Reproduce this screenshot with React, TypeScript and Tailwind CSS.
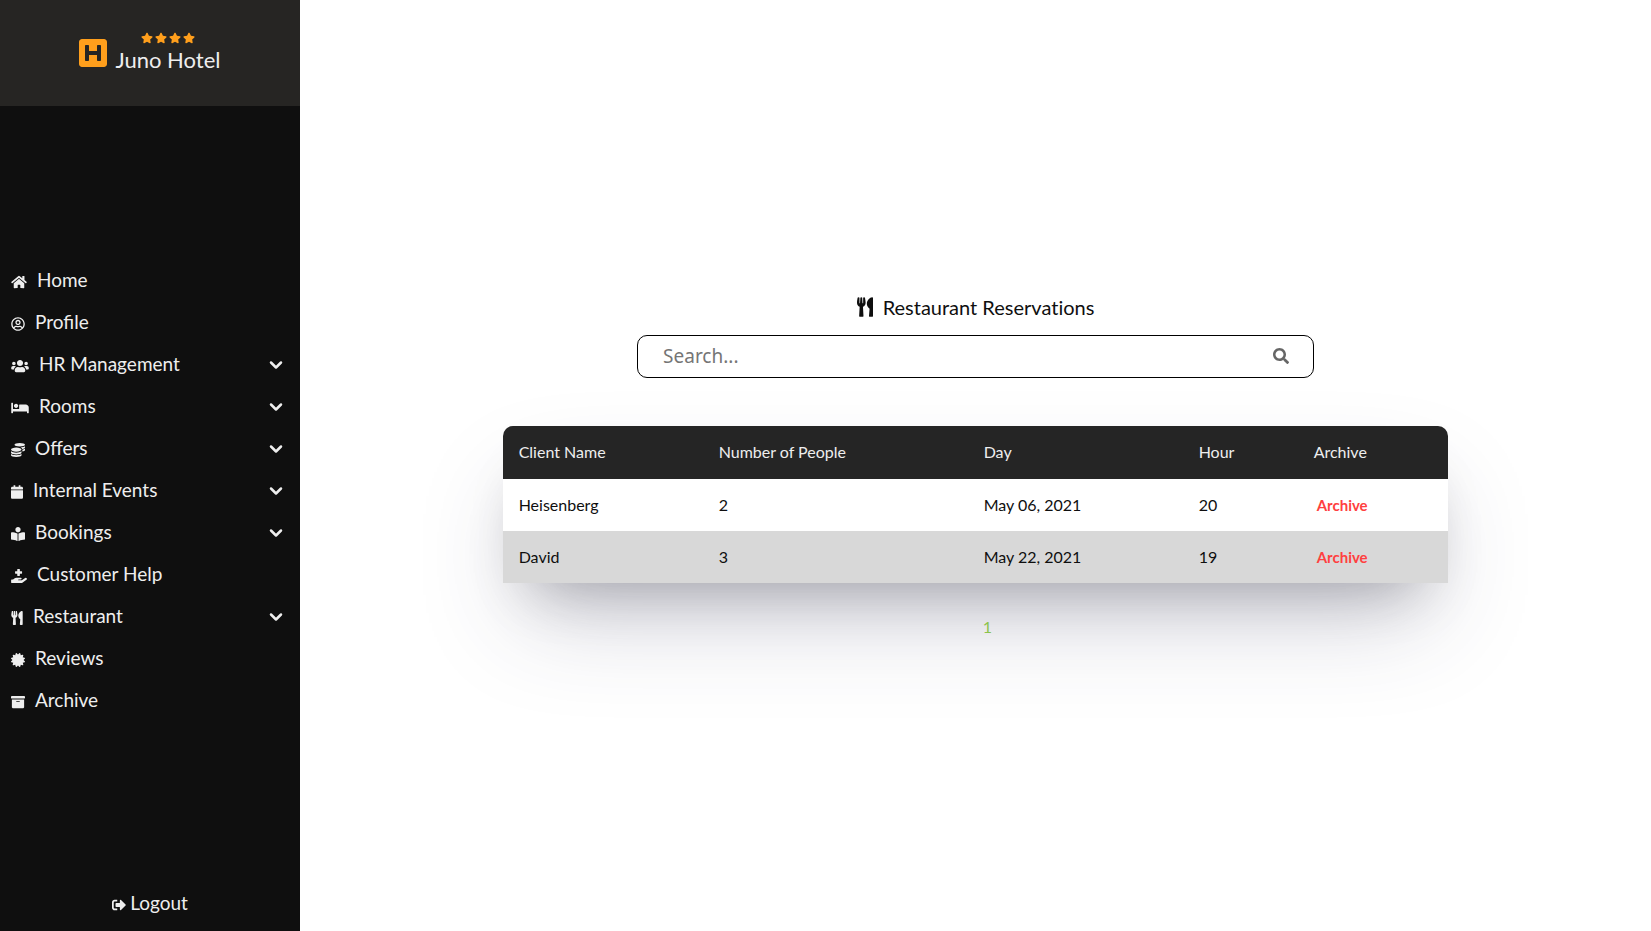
import type { ReactNode } from "react";
import type { IconType } from "react-icons";
import {
  FaArchive,
  FaBed,
  FaBookReader,
  FaCalendar,
  FaCertificate,
  FaCoins,
  FaHandHoldingMedical,
  FaHome,
  FaHSquare,
  FaRegUserCircle,
  FaSearch,
  FaSignOutAlt,
  FaStar,
  FaUsers,
  FaUtensils,
} from "react-icons/fa";
import { FiChevronDown } from "react-icons/fi";

type NavEntry = { label: string; icon: IconType; iconWidth: string; expandable?: boolean };

const navEntries: NavEntry[] = [
  { label: "Home", icon: FaHome, iconWidth: "w-4" },
  { label: "Profile", icon: FaRegUserCircle, iconWidth: "w-3.5" },
  { label: "HR Management", icon: FaUsers, iconWidth: "w-[18px]", expandable: true },
  { label: "Rooms", icon: FaBed, iconWidth: "w-[18px]", expandable: true },
  { label: "Offers", icon: FaCoins, iconWidth: "w-3.5", expandable: true },
  { label: "Internal Events", icon: FaCalendar, iconWidth: "w-3", expandable: true },
  { label: "Bookings", icon: FaBookReader, iconWidth: "w-3.5", expandable: true },
  { label: "Customer Help", icon: FaHandHoldingMedical, iconWidth: "w-4" },
  { label: "Restaurant", icon: FaUtensils, iconWidth: "w-3", expandable: true },
  { label: "Reviews", icon: FaCertificate, iconWidth: "w-3.5" },
  { label: "Archive", icon: FaArchive, iconWidth: "w-3.5" },
];

const reservations = [
  { client: "Heisenberg", people: 2, day: "May 06, 2021", hour: 20 },
  { client: "David", people: 3, day: "May 22, 2021", hour: 19 },
];

function NavItem({ label, icon: Icon, iconWidth, expandable }: NavEntry) {
  const content: ReactNode = (
    <>
      <Icon className={`mt-1 h-3.5 shrink-0 ${iconWidth}`} aria-hidden />
      <span>{label}</span>
    </>
  );
  const row = "flex h-[42px] w-full items-center gap-2.5 pl-[11px] pr-3.5 text-left";
  return (
    <li>
      {expandable ? (
        <button type="button" aria-expanded={false} className={row}>
          {content}
          <FiChevronDown className="mt-0.5 ml-auto size-5 stroke-3" aria-hidden />
        </button>
      ) : (
        <a href="#" className={row}>
          {content}
        </a>
      )}
    </li>
  );
}

function Sidebar() {
  return (
    <aside className="flex w-[300px] shrink-0 flex-col bg-[#0f0f0f] text-[19px] leading-6 text-[#eeeeee]">
      <header className="flex h-[106px] items-center justify-center gap-2 bg-[#262523]">
        <FaHSquare className="h-8 w-7 text-[#ff9f1c]" aria-hidden />
        <div className="flex flex-col items-center pt-0.5">
          <div className="flex gap-0.5 text-[#ff9f1c]" role="img" aria-label="4 stars">
            <FaStar className="size-3" />
            <FaStar className="size-3" />
            <FaStar className="size-3" />
            <FaStar className="size-3" />
          </div>
          <h1 className="text-[22px] leading-8">Juno Hotel</h1>
        </div>
      </header>
      <nav className="flex grow flex-col justify-center">
        <ul>
          {navEntries.map((entry) => (
            <NavItem key={entry.label} {...entry} />
          ))}
        </ul>
      </nav>
      <footer className="flex justify-center pt-[18px] pb-4">
        <a href="#" className="flex items-center gap-1">
          <FaSignOutAlt className="mt-1 size-3.5" aria-hidden />
          Logout
        </a>
      </footer>
    </aside>
  );
}

function ReservationTable() {
  return (
    <table className="w-[70%] rounded-t-[10px] text-left text-base text-[#0f0f0f] shadow-[0_50px_100px_-20px_rgba(50,50,93,0.25),0_30px_60px_-30px_rgba(0,0,0,0.3)]">
      <thead className="text-[#eeeeee]">
        <tr className="h-[53px]">
          <th className="w-[200px] rounded-tl-[10px] bg-[#252525] px-4 font-normal">Client Name</th>
          <th className="w-[265px] bg-[#252525] px-4 font-normal">Number of People</th>
          <th className="w-[215px] bg-[#252525] px-4 font-normal">Day</th>
          <th className="w-[115px] bg-[#252525] px-4 font-normal">Hour</th>
          <th className="rounded-tr-[10px] bg-[#252525] px-4 font-normal">Archive</th>
        </tr>
      </thead>
      <tbody>
        {reservations.map((r) => (
          <tr key={r.client} className="h-[52px] bg-white even:bg-[#d8d8d8]">
            <td className="px-4">{r.client}</td>
            <td className="px-4">{r.people}</td>
            <td className="px-4">{r.day}</td>
            <td className="px-4">{r.hour}</td>
            <td className="px-4">
              <button type="button" className="px-[3px] text-[15px] font-bold text-[#ff4040]">
                Archive
              </button>
            </td>
          </tr>
        ))}
      </tbody>
    </table>
  );
}

export default function App() {
  return (
    <div className="flex min-h-screen bg-white font-['Lato',sans-serif]">
      <Sidebar />
      <main className="flex grow flex-col items-center justify-center overflow-hidden">
        <h2 className="flex items-center gap-2.5 text-xl text-[#0f0f0f] [font-variant-ligatures:no-common-ligatures]">
          <FaUtensils className="h-5 w-4" aria-hidden />
          Restaurant Reservations
        </h2>
        <form
          role="search"
          className="mt-3.5 flex h-[43px] w-[50.1%] items-center rounded-[10px] border border-black pr-6 pl-[25px]"
        >
          <input
            type="search"
            aria-label="Search reservations"
            placeholder="Search..."
            className="min-w-0 grow bg-transparent font-['Noto_Sans',sans-serif] text-[19px] outline-none placeholder:text-[#757575]"
          />
          <button type="submit" aria-label="Search" className="text-[#666666]">
            <FaSearch className="size-4" aria-hidden />
          </button>
        </form>
        <div className="mt-12 flex w-full justify-center">
          <ReservationTable />
        </div>
        <nav aria-label="Pagination" className="mt-8 pl-6">
          <a href="#" aria-current="page" className="text-base text-[#8bc34a]">
            1
          </a>
        </nav>
      </main>
    </div>
  );
}
